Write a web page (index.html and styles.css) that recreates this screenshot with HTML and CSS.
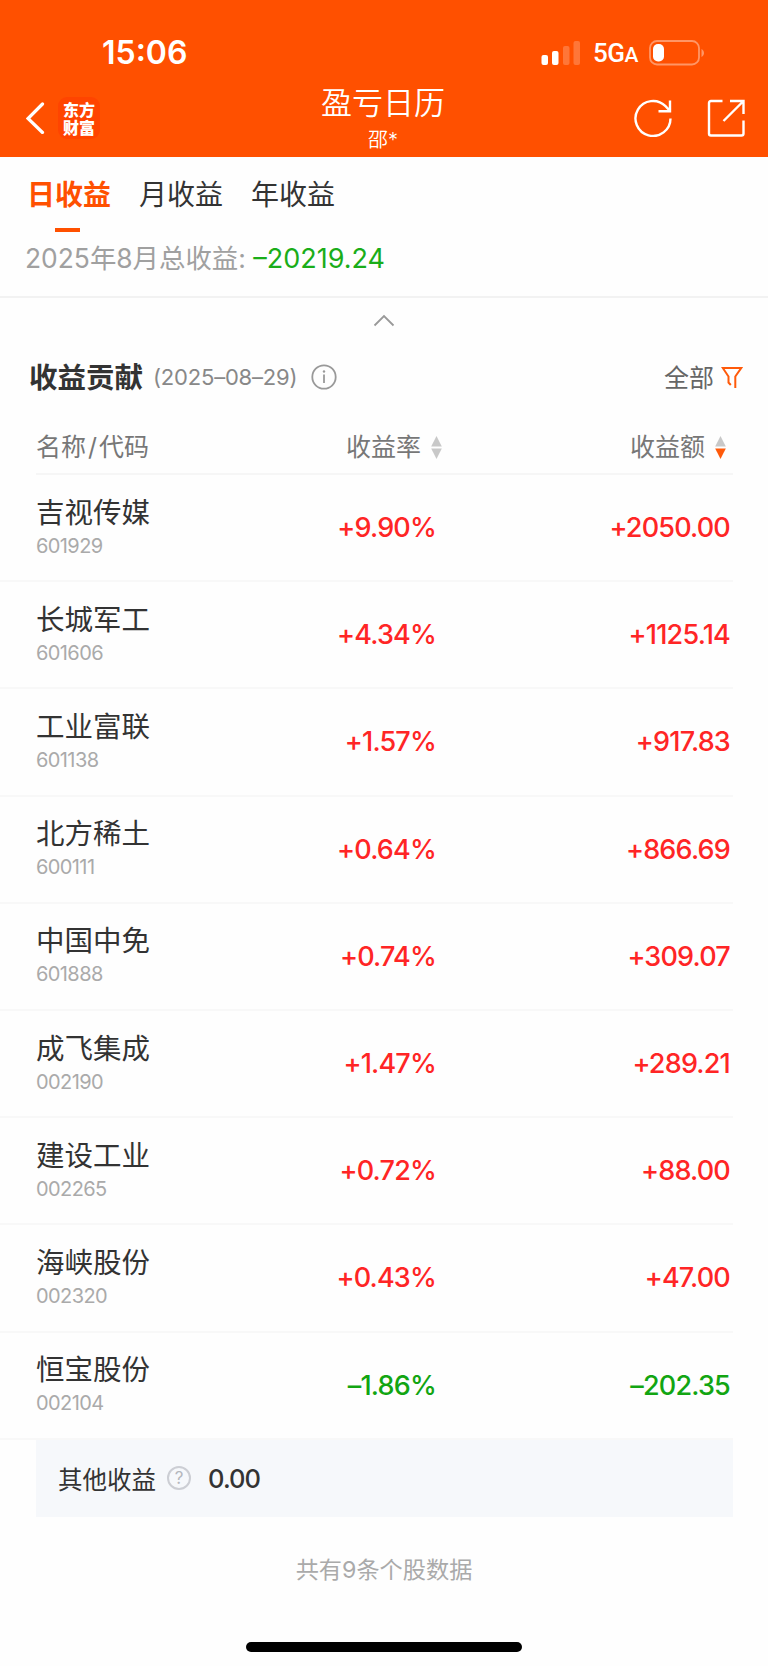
FILE: index.html
```html
<!DOCTYPE html>
<html lang="zh-CN">

<head>
    <meta charset="UTF-8">
    <meta name="viewport" content="width=device-width, initial-scale=1.0">
    <title>盈亏日历</title>
    <link rel="stylesheet" href="styles.css">
</head>

<body>
    <header class="header">
        <div class="status-bar">
            <span class="time">15:06</span>
            <div class="status-icons">
                <svg class="signal" width="40" height="26" viewBox="0 0 40 26" fill="#fff">
                    <rect x="0.5" y="15" width="6.5" height="10" rx="2" />
                    <rect x="11" y="11" width="6.5" height="14" rx="2" />
                    <rect x="22" y="6" width="6.5" height="19" rx="2" opacity=".22" />
                    <rect x="32.5" y="1" width="6.5" height="24" rx="2" opacity=".22" />
                </svg>
                <span class="network">5G<small>A</small></span>
                <svg class="battery" width="56" height="26" viewBox="0 0 56 26">
                    <rect x="1" y="1" width="49" height="23.5" rx="7" fill="none" stroke="#fff" stroke-width="1.8" opacity=".4" />
                    <rect x="4" y="4" width="11" height="17.5" rx="5" fill="#fff" />
                    <path d="M52.5 9c3.3 1.5 3.3 6.5 0 8z" fill="#fff" opacity=".4" />
                </svg>
            </div>
        </div>
        <nav class="nav-bar">
            <div class="nav-left">
                <svg width="20" height="32" viewBox="0 0 20 32" fill="none" stroke="#fff" stroke-width="3.2" stroke-linecap="round">
                    <path d="M16.5 2L2 16.5L16.5 30.5" />
                </svg>
                <div class="logo">东方财富</div>
            </div>
            <div class="nav-title">
                <h1>盈亏日历</h1>
                <p>邵*</p>
            </div>
            <div class="nav-right">
                <svg width="38" height="38" viewBox="0 0 38 38" fill="none" stroke="#fff" stroke-width="2.4">
                    <path d="M36.500 19.500A17.500 17.500 0 1 1 31.500 7.200L36 12M36 1.500V12.300H24.500" />
                </svg>
                <svg width="38" height="38" viewBox="0 0 38 38" fill="none" stroke="#fff" stroke-width="2.4">
                    <path d="M15.500 2H4Q2 2 2 4V34.500Q2 36.500 4 36.500H34.500Q36.500 36.500 36.500 34.500V21.500M23 2H36.500V15M36.500 2L16.500 22" />
                </svg>
            </div>
        </nav>
    </header>

    <section class="summary">
        <div class="tabs">
            <a class="tab active">日收益</a>
            <a class="tab">月收益</a>
            <a class="tab">年收益</a>
        </div>
        <p class="total">2025年8月总收益: <span class="total-value">–20219.24</span></p>
    </section>

    <div class="collapse">
        <svg width="22" height="14" viewBox="0 0 22 14" fill="none" stroke="#999" stroke-width="1.8">
            <path d="M1.5 11.5L11 2L20.5 11.5" />
        </svg>
    </div>

    <div class="section-head">
        <h2>收益贡献</h2>
        <span class="date">(2025–08–29)</span>
        <svg class="info" width="26" height="26" viewBox="0 0 26 26" fill="none" stroke="#999" stroke-width="1.8">
            <circle cx="13" cy="13" r="11.7" />
            <path d="M13 10.5V19" />
            <circle cx="13" cy="7.5" r="1.2" fill="#999" stroke="none" />
        </svg>
        <div class="filter">
            <span>全部</span>
            <svg width="22" height="23" viewBox="0 0 22 23" fill="none" stroke="#ff5a0a" stroke-width="2">
                <path d="M9.8 19L7.500 16.500V10.500L1.800 2H20.200L14.300 10.500V22" />
            </svg>
        </div>
    </div>

    <div class="table-head">
        <span class="col-name">名称<i>/</i>代码</span>
        <span class="col-rate">收益率
            <svg width="11" height="23" viewBox="0 0 11 23" fill="#c8c8c8">
                <path d="M5.5 0L10.8 10.5H0.2Z" />
                <path d="M5.5 23L10.8 12.5H0.2Z" />
            </svg>
        </span>
        <span class="col-amount">收益额
            <svg width="11" height="23" viewBox="0 0 11 23" fill="#c8c8c8">
                <path d="M5.5 0L10.8 10.5H0.2Z" />
                <path d="M5.5 23L10.8 12.5H0.2Z" fill="#ff5a0a" />
            </svg>
        </span>
    </div>

    <ul class="stock-list">
        <li class="stock up">
            <div class="stock-name">吉视传媒<small>601929</small></div>
            <span class="rate">+9.90%</span>
            <span class="amount">+2050.00</span>
        </li>
        <li class="stock up">
            <div class="stock-name">长城军工<small>601606</small></div>
            <span class="rate">+4.34%</span>
            <span class="amount">+1125.14</span>
        </li>
        <li class="stock up">
            <div class="stock-name">工业富联<small>601138</small></div>
            <span class="rate">+1.57%</span>
            <span class="amount">+917.83</span>
        </li>
        <li class="stock up">
            <div class="stock-name">北方稀土<small>600111</small></div>
            <span class="rate">+0.64%</span>
            <span class="amount">+866.69</span>
        </li>
        <li class="stock up">
            <div class="stock-name">中国中免<small>601888</small></div>
            <span class="rate">+0.74%</span>
            <span class="amount">+309.07</span>
        </li>
        <li class="stock up">
            <div class="stock-name">成飞集成<small>002190</small></div>
            <span class="rate">+1.47%</span>
            <span class="amount">+289.21</span>
        </li>
        <li class="stock up">
            <div class="stock-name">建设工业<small>002265</small></div>
            <span class="rate">+0.72%</span>
            <span class="amount">+88.00</span>
        </li>
        <li class="stock up">
            <div class="stock-name">海峡股份<small>002320</small></div>
            <span class="rate">+0.43%</span>
            <span class="amount">+47.00</span>
        </li>
        <li class="stock down">
            <div class="stock-name">恒宝股份<small>002104</small></div>
            <span class="rate">–1.86%</span>
            <span class="amount">–202.35</span>
        </li>
    </ul>

    <div class="other">
        <span>其他收益</span>
        <span class="help">?</span>
        <span class="other-value">0.00</span>
    </div>

    <p class="count">共有9条个股数据</p>
    <div class="home-bar"></div>
</body>

</html>
```
FILE: styles.css
```css
* {
    box-sizing: border-box;
}

body {
    margin: 0;
    width: 768px;
    height: 1666px;
    overflow: hidden;
    background-color: #fefefe;
    color: #333;
    font-family: Inter, "Noto Sans CJK SC", sans-serif;
    display: flex;
    flex-direction: column;
}

h1,
h2,
p,
ul {
    margin: 0;
    padding: 0;
    font-weight: normal;
}

svg {
    display: block;
    flex: none;
}

/* header */
.header {
    height: 157px;
    flex: none;
    background-color: #ff5000;
    color: #fff;
}

.status-bar {
    height: 84px;
    padding: 21px 63px 0 102px;
    display: flex;
    justify-content: space-between;
    align-items: center;
}

.time {
    font-size: 32px;
    font-weight: 600;
}

.status-icons {
    display: flex;
    align-items: center;
}

.network {
    width: 43px;
    margin: 3px 13px 0 12px;
    font-family: Roboto, sans-serif;
    font-size: 26px;
    line-height: 26px;
    font-weight: 500;
    letter-spacing: -0.5px;
}

.network small {
    font-size: 21px;
}

.nav-bar {
    height: 73px;
    padding: 0 23px 0 26px;
    display: grid;
    grid-template-columns: 1fr 160px 1fr;
}

.nav-left {
    height: 68px;
    display: flex;
    align-items: center;
    gap: 12px;
}

.logo {
    width: 42px;
    height: 42px;
    padding: 3px 5px;
    border-radius: 9px;
    background-color: #ff4400;
    font-family: "Noto Sans CJK SC", sans-serif;
    font-size: 16px;
    line-height: 18px;
    font-weight: 900;
    word-break: break-all;
}

.nav-title {
    padding-right: 5px;
    text-align: center;
}

.nav-title h1 {
    font-size: 31px;
    line-height: 38px;
    font-weight: 350;
}

.nav-title p {
    font-size: 20px;
    line-height: 36px;
    font-weight: 350;
}

.nav-right {
    height: 68px;
    display: flex;
    justify-content: flex-end;
    align-items: center;
    gap: 35px;
}

/* tabs and monthly total */
.summary {
    height: 141px;
    flex: none;
    border-bottom: 2px solid #f2f2f2;
}

.tabs {
    height: 76px;
    padding-left: 27px;
    display: flex;
    gap: 28px;
}

.tab {
    height: 75px;
    font-size: 28px;
    line-height: 76px;
}

.tab.active {
    color: #ff5000;
    font-weight: 700;
}

.tab.active::after {
    content: "";
    display: block;
    width: 25px;
    height: 4px;
    margin: -5px 0 0 28px;
    background-color: #ff5000;
}

.total {
    padding-left: 25px;
    font-size: 26.4px;
    line-height: 50px;
    color: #a0a0a0;
}

.total-value {
    font-size: 27px;
    color: #1aad19;
}

.collapse {
    height: 46px;
    flex: none;
    display: flex;
    justify-content: center;
    align-items: center;
}

/* contribution table */
.section-head {
    height: 66px;
    flex: none;
    padding: 0 25px 0 29px;
    display: flex;
    align-items: center;
}

.section-head h2 {
    margin-bottom: 4px;
    font-size: 28.5px;
    font-weight: 700;
}

.date {
    width: 148px;
    margin-left: 10px;
    font-size: 22px;
    letter-spacing: -0.2px;
    color: #888;
}

.info {
    margin-left: 10px;
}

.filter {
    margin-left: auto;
    display: flex;
    align-items: center;
    gap: 7px;
    font-size: 25px;
    color: #666;
}

.filter span {
    margin-bottom: 2px;
}

.table-head {
    height: 65px;
    flex: none;
    margin: 0 35px 0 36px;
    padding-bottom: 9px;
    border-bottom: 2px solid #f6f6f6;
    display: grid;
    grid-template-columns: 1fr 200px 284px;
    align-items: end;
    font-size: 25px;
    line-height: 34px;
    color: #777;
}

.col-name i {
    margin: 0 2px;
    font-style: normal;
}

.col-rate,
.col-amount {
    padding-right: 7px;
    display: flex;
    justify-content: flex-end;
    align-items: center;
    gap: 10px;
}

.stock-list {
    list-style: none;
}

.stock {
    height: 107.2px;
    margin-right: 35px;
    padding-left: 36px;
    border-bottom: 2px solid #f8f8f8;
    display: grid;
    grid-template-columns: 1fr 200px 296px;
    align-items: center;
}

.stock-name {
    font-size: 28.5px;
    line-height: 36px;
    color: #333;
}

.stock-name small {
    display: block;
    font-size: 20px;
    line-height: 30px;
    letter-spacing: -0.6px;
    color: #aaa;
}

.rate,
.amount {
    font-size: 27px;
    font-weight: 550;
    letter-spacing: -0.8px;
    text-align: right;
}

.rate {
    padding-right: 1px;
}

.amount {
    padding-right: 3px;
}

.up {
    color: #ff2525;
}

.down {
    color: #12a512;
}

.other {
    height: 77px;
    flex: none;
    margin: 0 35px 0 36px;
    padding-left: 22px;
    background-color: #f6f8fb;
    display: flex;
    align-items: center;
    font-size: 24.5px;
}

.help {
    width: 24px;
    height: 24px;
    margin: 0 17px 0 11px;
    border: 2px solid #ccced4;
    border-radius: 50%;
    font-size: 17px;
    line-height: 21px;
    text-align: center;
    color: #b4b6bc;
}

.other-value {
    font-size: 25.5px;
    font-weight: 550;
    letter-spacing: -0.9px;
}

.count {
    padding-top: 35px;
    font-size: 23.2px;
    line-height: 36px;
    text-align: center;
    color: #aaa;
}

.home-bar {
    width: 276px;
    height: 10px;
    margin: auto auto 14px;
    border-radius: 5px;
    background-color: #000;
}
```
